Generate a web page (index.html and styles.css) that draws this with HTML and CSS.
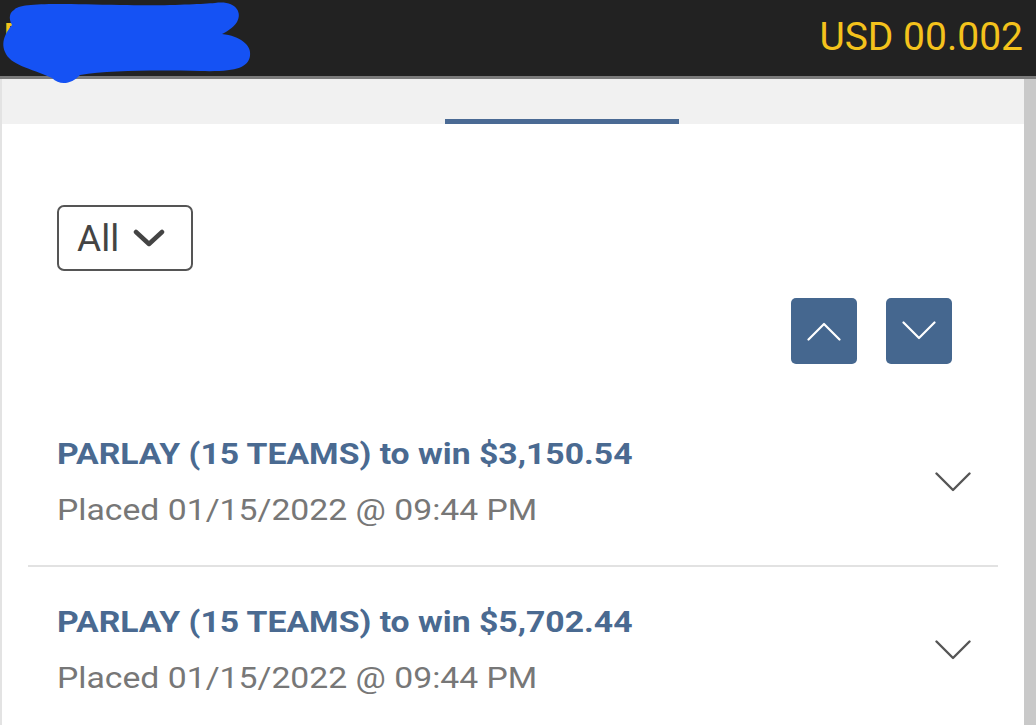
FILE: index.html
```html
<!DOCTYPE html>
<html lang="en">
<head>
<meta charset="utf-8">
<title>Bets</title>
<link rel="stylesheet" href="styles.css">
</head>
<body>
<header class="topbar">
  <span class="brand">D</span>
  <span class="balance">USD 00.002</span>
  <svg class="redact" width="256" height="90" viewBox="0 0 256 90" aria-hidden="true">
    <path d="M14 10 C20 2 60 4 120 5 C170 6 200 4 215 3 C235 0 243 12 237 22 C233 28 226 32 222 34 C240 36 252 45 250 56 C248 68 235 72 200 71 C160 70 110 70 80 75 C72 84 60 86 52 78 C30 68 10 65 5 52 C0 40 8 30 12 25 C8 18 10 12 14 10 Z" fill="#1552f4"/>
  </svg>
</header>
<div class="page">
  <main class="main">
    <nav class="tabs">
      <div class="tab active"></div>
    </nav>
    <section class="content">
      <div class="filter">
        <button class="select">All
          <svg width="32" height="18" viewBox="0 0 32 18"><path d="M3 3 L16 15 L29 3" fill="none" stroke="#444" stroke-width="4.5" stroke-linecap="round" stroke-linejoin="round"/></svg>
        </button>
      </div>
      <div class="nav-buttons">
        <button class="nav-btn"><svg width="34" height="20" viewBox="0 0 34 20"><path d="M1.5 18.5 L17 3 L32.5 18.5" fill="none" stroke="#fff" stroke-width="2.2" stroke-linecap="round" stroke-linejoin="round"/></svg></button>
        <button class="nav-btn"><svg width="34" height="20" viewBox="0 0 34 20"><path d="M1.5 1.5 L17 17 L32.5 1.5" fill="none" stroke="#fff" stroke-width="2.2" stroke-linecap="round" stroke-linejoin="round"/></svg></button>
      </div>
      <ul class="bets">
        <li class="bet">
          <div class="bet-info">
            <div class="bet-title"><span class="wide">PARLAY (15 TEAMS) to win $3,150.54</span></div>
            <div class="bet-date"><span class="wide">Placed 01/15/2022 @ 09:44 PM</span></div>
          </div>
          <svg class="chev" width="36" height="20" viewBox="0 0 36 20"><path d="M1.5 1.5 L18 18 L34.5 1.5" fill="none" stroke="#555" stroke-width="2.4" stroke-linecap="round" stroke-linejoin="round"/></svg>
        </li>
        <li class="bet">
          <div class="bet-info">
            <div class="bet-title"><span class="wide">PARLAY (15 TEAMS) to win $5,702.44</span></div>
            <div class="bet-date"><span class="wide">Placed 01/15/2022 @ 09:44 PM</span></div>
          </div>
          <svg class="chev" width="36" height="20" viewBox="0 0 36 20"><path d="M1.5 1.5 L18 18 L34.5 1.5" fill="none" stroke="#555" stroke-width="2.4" stroke-linecap="round" stroke-linejoin="round"/></svg>
        </li>
      </ul>
    </section>
  </main>
  <div class="scrollbar"></div>
</div>
</body>
</html>
```
FILE: styles.css
```css
* { box-sizing: border-box; }
html, body { margin: 0; padding: 0; }
body {
  font-family: Roboto, "Noto Sans", sans-serif;
  background: #fff;
  width: 1036px;
  height: 725px;
  overflow: hidden;
}
.topbar {
  position: relative;
  height: 79px;
  background: #222222;
  border-bottom: 3px solid #7b7b7b;
  display: flex;
  align-items: center;
  justify-content: space-between;
  padding: 0 13px 0 3px;
  color: #f4c21c;
  font-size: 39px;
}
.brand { line-height: 1; }
.balance {
  display: inline-block;
  line-height: 1;
  margin-top: -2px;
}
.redact {
  position: absolute;
  left: 0;
  top: 0;
}
.page {
  display: flex;
  height: 646px;
}
.main {
  flex: 1;
  border-left: 2px solid #e3e3e3;
  background: #fff;
}
.scrollbar {
  width: 12px;
  background: #c9c9c9;
}
.tabs {
  height: 45px;
  background: #f1f1f1;
  display: flex;
  align-items: flex-end;
  padding-left: 443px;
}
.tab.active {
  width: 234px;
  height: 5px;
  background: #4a6a94;
}
.content { padding-top: 81px; }
.filter { padding-left: 55px; }
.select {
  width: 136px;
  height: 66px;
  border: 2px solid #555;
  border-radius: 7px;
  background: #fff;
  font-family: Roboto, sans-serif;
  font-size: 37px;
  color: #444;
  display: flex;
  align-items: center;
  gap: 14px;
  padding: 0 0 0 18px;
  cursor: pointer;
}
.nav-buttons {
  display: flex;
  justify-content: flex-end;
  gap: 29px;
  margin-top: 27px;
  padding-right: 72px;
}
.nav-btn {
  width: 66px;
  height: 66px;
  border: none;
  border-radius: 5px;
  background: #45678f;
  display: flex;
  align-items: center;
  justify-content: center;
  padding: 0;
}
.bets {
  list-style: none;
  margin: 35px 26px 0 26px;
  padding: 0;
}
.bet {
  display: flex;
  align-items: center;
  justify-content: space-between;
  padding: 37px 27px 37px 29px;
  border-bottom: 2px solid #e2e2e2;
}
.bet-info {
  display: flex;
  flex-direction: column;
  gap: 20px;
}
.bet-title {
  font-size: 29px;
  line-height: 36px;
  font-weight: 700;
  color: #4a6a91;
  white-space: nowrap;
}
.bet-date {
  font-size: 29px;
  line-height: 36px;
  color: #777;
  white-space: nowrap;
}
.wide {
  display: inline-block;
  transform: scaleX(1.163);
  transform-origin: left center;
}
.chev { flex-shrink: 0; }
```
